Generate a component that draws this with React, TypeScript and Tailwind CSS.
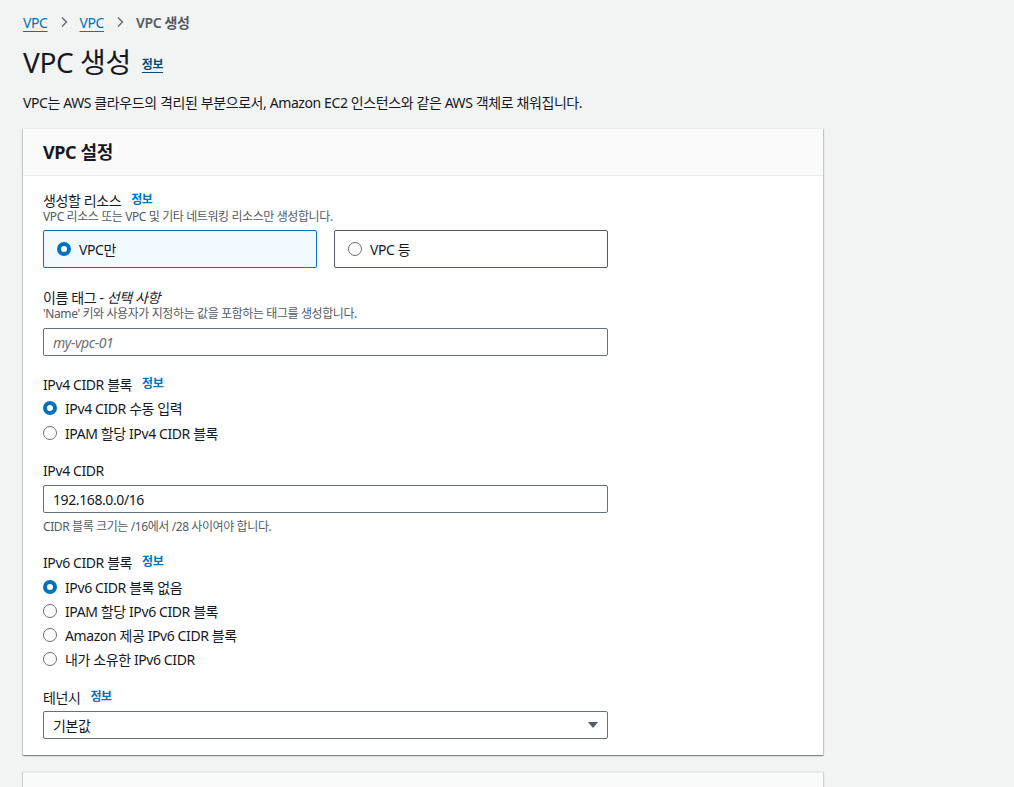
import React from "react";

const font = { fontFamily: '"Noto Sans", "Noto Sans CJK KR", sans-serif' };

function Radio({ checked }: { checked: boolean }) {
  return checked ? (
    <span className="inline-block w-[14px] h-[14px] rounded-full border-[4px] border-[#0073bb] bg-white shrink-0" />
  ) : (
    <span className="inline-block w-[14px] h-[14px] rounded-full border-[1.5px] border-[#687078] bg-white shrink-0" />
  );
}

function Info({ className = "" }: { className?: string }) {
  return <span className={"text-[12px] font-bold text-[#0073bb] " + className}>정보</span>;
}

function RadioRow({ checked, label }: { checked: boolean; label: string }) {
  return (
    <div className="flex items-center h-[24px] gap-[8px]">
      <Radio checked={checked} />
      <span className="text-[14px] text-[#16191f]">{label}</span>
    </div>
  );
}

export default function App() {
  return (
    <div style={font} className="min-h-[787px] bg-[#f2f3f3] text-[#16191f] overflow-hidden tracking-[-0.025em]">
      <div className="pl-[23px] pt-[12px]">
        <div className="flex items-center h-[20px] text-[14px]">
          <span className="text-[#0073bb] underline underline-offset-[3px]">VPC</span>
          <svg width="10" height="12" viewBox="0 0 10 12" className="mx-[11px]">
            <path d="M3 1.5 L7.5 6 L3 10.5" fill="none" stroke="#687078" strokeWidth="1.5" />
          </svg>
          <span className="text-[#0073bb] underline underline-offset-[3px]">VPC</span>
          <svg width="10" height="12" viewBox="0 0 10 12" className="mx-[11px]">
            <path d="M3 1.5 L7.5 6 L3 10.5" fill="none" stroke="#687078" strokeWidth="1.5" />
          </svg>
          <span className="text-[#545b64] font-semibold">VPC 생성</span>
        </div>
        <div className="flex items-end mt-[12px] h-[36px]">
          <h1 className="text-[28px] leading-[36px] font-normal text-[#16191f]">VPC 생성</h1>
          <span className="ml-[11px] mb-[6px] text-[12px] font-bold text-[#0a4a74] underline underline-offset-[3px]">정보</span>
        </div>
        <p className="mt-[13px] text-[14px] leading-[20px]">
          VPC는 AWS 클라우드의 격리된 부분으로서, Amazon EC2 인스턴스와 같은 AWS 객체로 채워집니다.
        </p>
      </div>

      <div className="ml-[23px] mt-[15px] w-[800px] bg-white border-t border-[#eaeded] shadow-[0_1px_1px_0_rgba(0,28,36,0.3),1px_1px_1px_0_rgba(0,28,36,0.15),-1px_1px_1px_0_rgba(0,28,36,0.15)]">
        <div className="h-[47px] bg-[#fafafa] border-b border-[#eaeded] flex items-center px-[20px]">
          <h2 className="text-[18px] font-bold">VPC 설정</h2>
        </div>
        <div className="px-[20px] pt-[15px] pb-[16px]">
          <div className="flex items-center h-[18px] text-[14px]">
            <span>생성할 리소스</span>
            <Info className="ml-[10px]" />
          </div>
          <div className="text-[12px] leading-[16px] text-[#545b64]">VPC 리소스 또는 VPC 및 기타 네트워킹 리소스만 생성합니다.</div>
          <div className="mt-[5px] flex gap-[17px] w-[565px]">
            <div className="flex-1 h-[38px] border border-[#0073bb] bg-[#f1faff] rounded-[2px] flex items-center pl-[13px] gap-[8px]">
              <Radio checked />
              <span className="text-[14px]">VPC만</span>
            </div>
            <div className="flex-1 h-[38px] border border-[#545b64] bg-white rounded-[2px] flex items-center pl-[13px] gap-[8px]">
              <Radio checked={false} />
              <span className="text-[14px]">VPC 등</span>
            </div>
          </div>

          <div className="mt-[20px] flex items-center h-[18px] text-[14px]">
            <span>이름 태그 - <i>선택 사항</i></span>
          </div>
          <div className="text-[12px] leading-[16px] text-[#545b64]">'Name' 키와 사용자가 지정하는 값을 포함하는 태그를 생성합니다.</div>
          <div className="mt-[6px] w-[565px] h-[28px] border border-[#687078] rounded-[2px] flex items-center px-[9px]">
            <span className="text-[14px] italic text-[#687078]">my-vpc-01</span>
          </div>

          <div className="mt-[19px] flex items-center h-[18px] text-[14px]">
            <span>IPv4 CIDR 블록</span>
            <Info className="ml-[10px]" />
          </div>
          <div className="mt-[3px] flex flex-col gap-[1px]">
            <RadioRow checked label="IPv4 CIDR 수동 입력" />
            <RadioRow checked={false} label="IPAM 할당 IPv4 CIDR 블록" />
          </div>

          <div className="mt-[16px] flex items-center h-[18px] text-[14px]">
            <span>IPv4 CIDR</span>
          </div>
          <div className="mt-[6px] w-[565px] h-[28px] border border-[#687078] rounded-[2px] flex items-center px-[9px]">
            <span className="text-[14px]">192.168.0.0/16</span>
          </div>
          <div className="mt-[6px] text-[12px] leading-[16px] text-[#545b64]">CIDR 블록 크기는 /16에서 /28 사이여야 합니다.</div>

          <div className="mt-[18px] flex items-center h-[18px] text-[14px]">
            <span>IPv6 CIDR 블록</span>
            <Info className="ml-[10px]" />
          </div>
          <div className="mt-[4px] flex flex-col">
            <RadioRow checked label="IPv6 CIDR 블록 없음" />
            <RadioRow checked={false} label="IPAM 할당 IPv6 CIDR 블록" />
            <RadioRow checked={false} label="Amazon 제공 IPv6 CIDR 블록" />
            <RadioRow checked={false} label="내가 소유한 IPv6 CIDR" />
          </div>

          <div className="mt-[17px] flex items-center h-[18px] text-[14px]">
            <span>테넌시</span>
            <Info className="ml-[10px]" />
          </div>
          <div className="mt-[5px] w-[565px] h-[28px] border border-[#687078] rounded-[2px] flex items-center justify-between pl-[9px] pr-[8px]">
            <span className="text-[14px]">기본값</span>
            <svg width="12" height="8" viewBox="0 0 12 8">
              <path d="M1 1 L11 1 L6 7 Z" fill="#545b64" />
            </svg>
          </div>
        </div>
      </div>

      <div className="ml-[23px] mt-[17px] w-[800px] h-[40px] bg-[#fafafa] border-t border-[#eaeded] shadow-[1px_0_1px_0_rgba(0,28,36,0.15),-1px_0_1px_0_rgba(0,28,36,0.15)]" />
    </div>
  );
}
